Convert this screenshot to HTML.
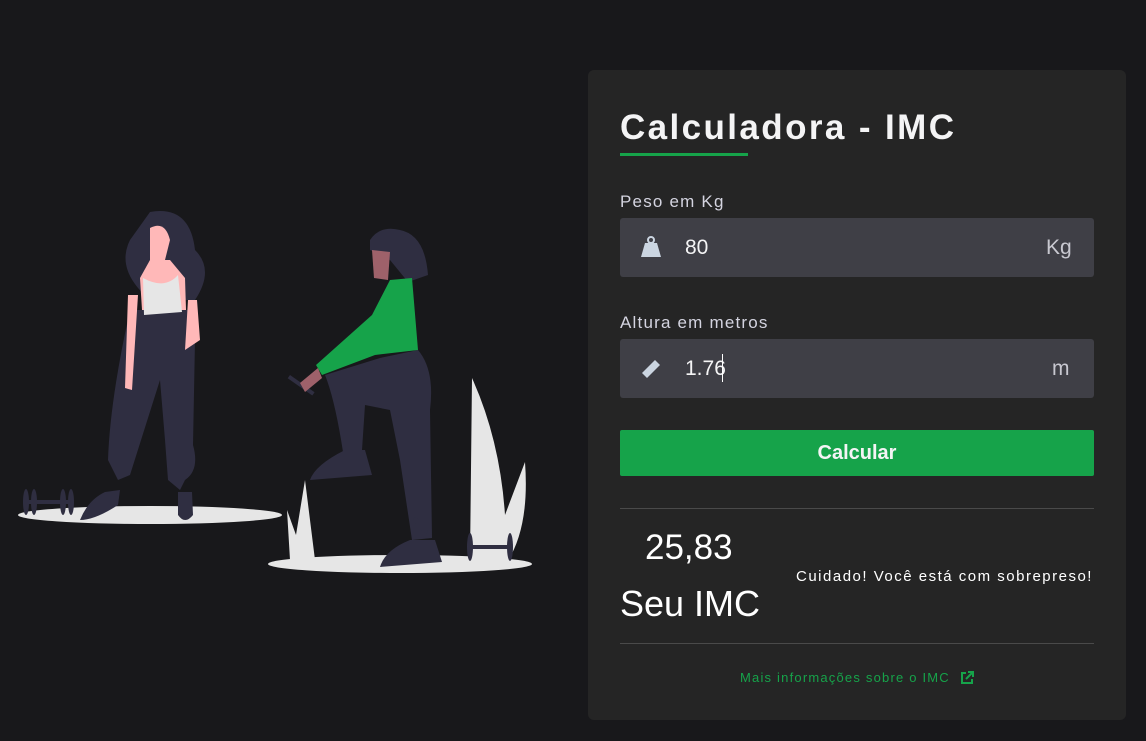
<!DOCTYPE html>
<html><head><meta charset="utf-8"><style>
*{margin:0;padding:0;box-sizing:border-box}
body{width:1146px;height:741px;background:#18181b;font-family:"Liberation Sans",sans-serif;position:relative;overflow:hidden;color:#fff}
.a{position:absolute}
.card{left:588px;top:70px;width:538px;height:650px;background:#252525;border-radius:6px}
h1{position:absolute;left:620px;top:108px;font-size:35px;font-weight:bold;color:#f4f4f5;letter-spacing:2.4px}
.ul{left:620px;top:153px;width:128px;height:3px;background:#16a34a}
.lbl{font-size:17px;color:#d4d4e0;letter-spacing:1.2px}
.inp{left:620px;width:474px;height:59px;background:#3f3f46;border-radius:3px}
.val{font-size:21px;color:#f4f4f5}
.unit{font-size:21px;color:#c8c8d0}
.btn{left:620px;top:430px;width:474px;height:46px;background:#16a34a;border-radius:2px;text-align:center;line-height:46px;font-weight:bold;font-size:20px;color:#f4f4f5}
.hr{left:620px;width:474px;height:1px;background:#4a4a4a}
</style></head><body>
<svg class="a" style="left:0;top:200px" width="560" height="380" viewBox="0 0 560 380">
<ellipse cx="150" cy="315" rx="132" ry="9" fill="#e6e6e6"/>
<ellipse cx="400" cy="364" rx="132" ry="9" fill="#e6e6e6"/>
<path d="M290 360 L287 310 L296 335 L305 280 L315 360Z" fill="#e6e6e6"/>
<path d="M470 360 L472 178 Q500 240 505 315 L525 262 Q530 330 505 365Z" fill="#e6e6e6"/>
<g fill="#2f2e41">
<rect x="25" y="300" width="45" height="4"/><ellipse cx="26" cy="302" rx="3" ry="13"/><ellipse cx="34" cy="302" rx="3" ry="13"/><ellipse cx="63" cy="302" rx="3" ry="13"/><ellipse cx="71" cy="302" rx="3" ry="13"/>
<rect x="470" y="345" width="40" height="4"/><ellipse cx="470" cy="347" rx="3" ry="14"/><ellipse cx="510" cy="347" rx="3" ry="14"/>
<path d="M150 12 Q190 5 195 50 Q215 70 195 100 L150 100 Q115 70 130 40Z"/>
<path d="M130 110 L190 110 L195 140 L193 245 Q200 270 185 280 L180 290 L168 280 L165 240 L160 180 L130 275 L118 280 L108 260 Q110 200 130 110Z"/>
<path d="M105 292 L120 290 L118 305 Q95 320 80 320 Q88 300 105 292Z"/>
<path d="M178 292 L192 292 L193 315 Q185 325 178 315Z"/>
<path d="M370 40 Q380 25 400 30 Q425 35 428 75 L408 82 L390 60 L370 50Z"/>
<path d="M380 158 L418 150 Q435 170 430 210 L432 338 L412 340 L400 260 L390 210 L365 205 L362 250 L343 252 Q335 200 325 175Z"/>
<path d="M345 250 L365 250 L372 275 L310 280 Q315 265 345 250Z"/>
<path d="M410 340 L435 340 L442 362 L380 367 Q385 350 410 340Z"/>
<ellipse cx="292" cy="372" rx="3" ry="10" transform="rotate(-40 292 172)"/>
<rect x="290" y="175" width="30" height="4" transform="rotate(35 290 175)"/>
</g>
<path d="M150 28 Q165 20 170 40 L165 60 L150 60Z" fill="#ffb8b8"/>
<path d="M150 60 L170 60 L185 78 L186 110 L142 110 L140 78Z" fill="#ffb8b8"/>
<path d="M143 78 Q165 90 178 75 L182 112 L144 115Z" fill="#e6e6e6"/>
<path d="M128 95 L138 95 L132 190 L125 188Z M188 100 L197 100 L200 140 L185 150Z" fill="#ffb8b8"/>
<path d="M372 50 L390 52 L388 80 L374 78Z" fill="#9e616a"/>
<path d="M390 80 L412 78 L418 150 L375 155 L322 175 L316 165 L372 115Z" fill="#16a34a"/>
<path d="M300 183 L318 168 L322 178 L305 192Z" fill="#9e616a"/>
</svg>
<div class="a card"></div>
<h1>Calculadora - IMC</h1>
<div class="a ul"></div>
<div class="a lbl" style="left:620px;top:192px">Peso em Kg</div>
<div class="a inp" style="top:218px"></div>
<svg class="a" style="left:640px;top:236px" width="22" height="22" viewBox="0 0 22 22"><circle cx="11" cy="4" r="3" fill="none" stroke="#cbd5e1" stroke-width="2"/><path d="M5 7 L17 7 L21 21 L1 21Z" fill="#cbd5e1"/></svg>
<div class="a val" style="left:685px;top:236px">80</div>
<div class="a unit" style="left:1046px;top:236px">Kg</div>
<div class="a lbl" style="left:620px;top:313px">Altura em metros</div>
<div class="a inp" style="top:339px"></div>
<svg class="a" style="left:640px;top:357px" width="22" height="22" viewBox="0 0 22 22"><path d="M2 16 L15 3 L20 8 L7 21Z" fill="#cbd5e1"/></svg>
<div class="a val" style="left:685px;top:357px">1.76</div>
<div class="a" style="left:722px;top:354px;width:1px;height:28px;background:#fff"></div>
<div class="a unit" style="left:1052px;top:357px">m</div>
<div class="a btn">Calcular</div>
<div class="a hr" style="top:508px"></div>
<div class="a" style="left:645px;top:528px;font-size:35px">25,83</div>
<div class="a" style="left:620px;top:583px;font-size:36px">Seu IMC</div>
<div class="a" style="left:796px;top:568px;font-size:15px;letter-spacing:1.5px;white-space:nowrap">Cuidado! Você está com sobrepreso!</div>
<div class="a hr" style="top:643px"></div>
<div class="a" style="left:740px;top:670px;font-size:13px;color:#16a34a;letter-spacing:1.2px;white-space:nowrap">Mais informações sobre o IMC</div>
<svg class="a" style="left:960px;top:671px" width="14" height="14" viewBox="0 0 14 14" fill="none" stroke="#16a34a" stroke-width="2"><path d="M6 2H2V12H12V8M8 1H13V6M13 1L6 8"/></svg>
</body></html>
